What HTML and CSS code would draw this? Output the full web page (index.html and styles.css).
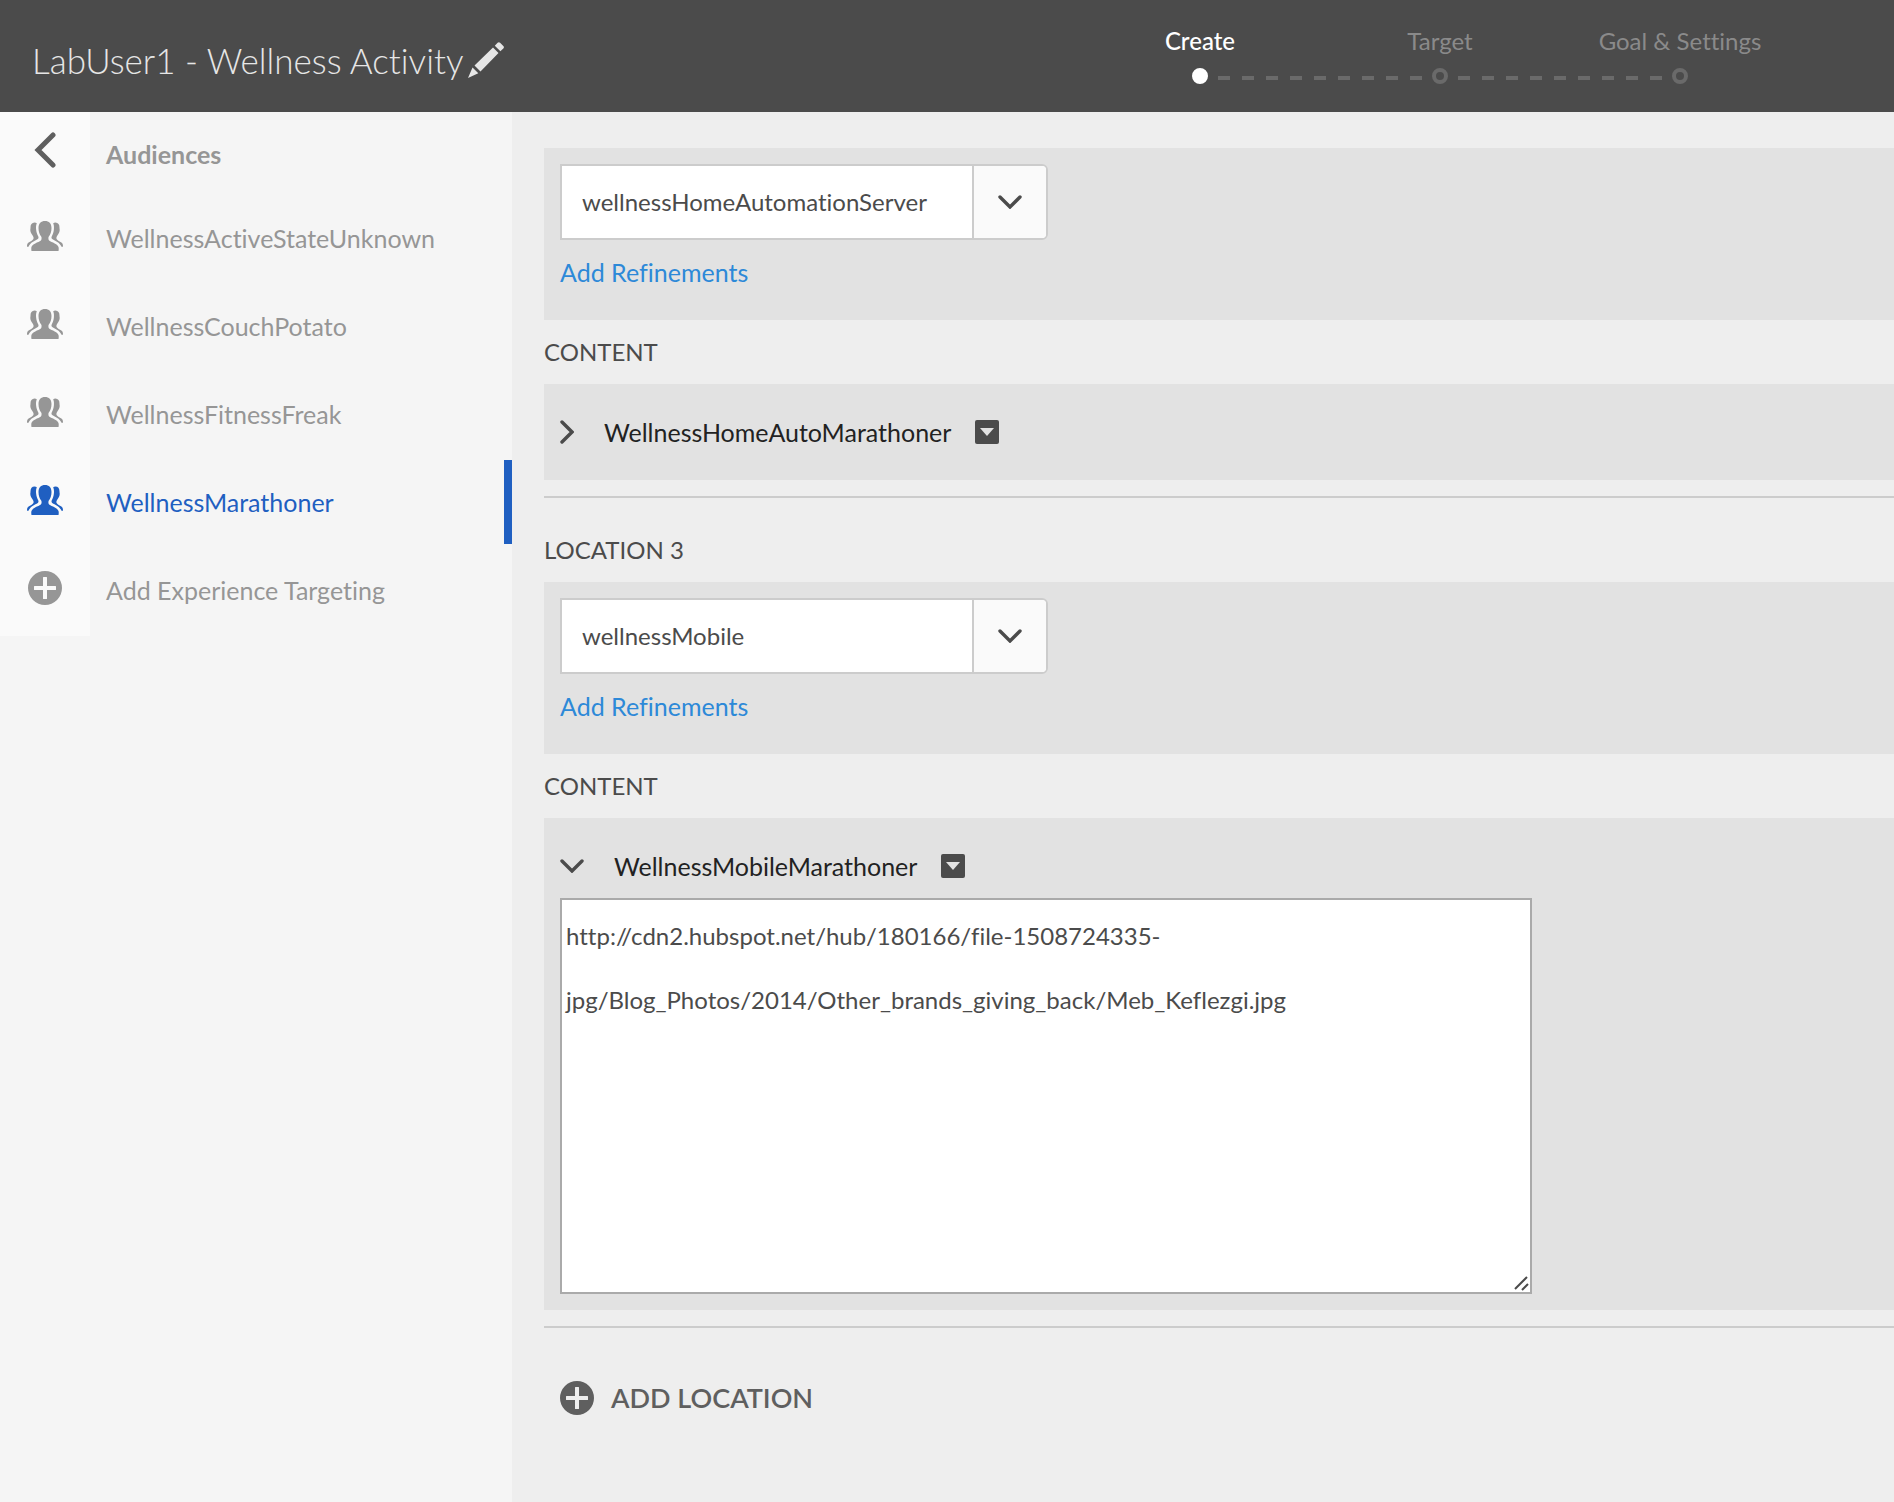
FILE: index.html
```html
<!DOCTYPE html>
<html lang="en">
<head>
<meta charset="utf-8">
<meta name="viewport" content="width=device-width, initial-scale=1">
<title>LabUser1 - Wellness Activity</title>
<link rel="stylesheet" href="styles.css">
</head>
<body>
<svg class="sprite" aria-hidden="true">
  <symbol id="people" viewBox="0 0 36 30">
    <path d="M18 0c4 0 6.500 2.400 6.500 7 0 3.800-1.200 6.800-2.700 8.600-.6.800-.5 3.300.3 3.900 2.500 1.800 9.200 3.600 9.600 7.300.1 1.300 0 2.200-.2 3.200h-27c-.2-1-.3-1.900-.2-3.200.4-3.700 7.100-5.500 9.600-7.300.8-.6.9-3.100.3-3.900-1.500-1.800-2.700-4.800-2.700-8.600C11.500 2.400 14 0 18 0z"/>
    <path d="M9.800 2.200C9 4 8.900 6 9.100 8.200c.2 2.600 1 5 2.200 7.200.4.900.2 2-.5 2.500-3.200 2-7.300 3.200-9.300 7.800H0c0-2 .2-3.200 1.600-4.200 1.700-1.200 4-2 4.800-3.600.6-1.400-.2-2.700-1.100-4-1.200-1.700-2-3.200-2-5.200 0-.8.300-1.200.2-2C3.400 3.500 4.800 1.400 7.600 1.400c.9 0 1.600.2 2.200.8z"/>
    <path d="M26.200 2.200c.8 1.800.9 3.800.7 6-.2 2.600-1 5-2.200 7.200-.4.900-.2 2 .5 2.500 3.200 2 7.300 3.200 9.300 7.800H36c0-2-.2-3.200-1.600-4.200-1.700-1.200-4-2-4.800-3.600-.6-1.400.2-2.700 1.100-4 1.200-1.700 2-3.200 2-5.200 0-.8-.3-1.200-.2-2 .1-3.200-1.300-5.300-4.100-5.300-.9 0-1.600.2-2.200.8z"/>
  </symbol>
  <symbol id="plus" viewBox="0 0 34 34">
    <path fill-rule="evenodd" d="M17 0a17 17 0 1 1 0 34 17 17 0 0 1 0-34zM15.500 6q-.5 0-.5.500V15H6.500q-.5 0-.5.500v3q0 .5.500.5H15v8.500q0 .5.500.5h3q.5 0 .5-.5V19h8.500q.5 0 .5-.5v-3q0-.5-.5-.5H19V6.500q0-.5-.5-.5z"/>
  </symbol>
  <symbol id="chevron-down" viewBox="0 0 24 14">
    <path d="M2 2l10 10L22 2" fill="none" stroke="currentColor" stroke-width="3.400" stroke-linecap="round"/>
  </symbol>
  <symbol id="chevron-right" viewBox="0 0 14 24">
    <path d="M2 2l10 10L2 22" fill="none" stroke="currentColor" stroke-width="3.400" stroke-linecap="round"/>
  </symbol>
  <symbol id="menu" viewBox="0 0 24 24">
    <rect width="24" height="24" rx="2"/>
    <path d="M5 8h14l-7 8z" fill="#e2e2e2"/>
  </symbol>
</svg>

<header class="topbar">
  <h1 class="title">LabUser1 - Wellness Activity
    <button class="icon-button" aria-label="Rename activity">
      <svg class="pencil" viewBox="0 0 36 36"><path d="M0 36l4.500-10.500 5.800 5.800zM6.500 23.500L25 5.500l5.500 5.500L12.500 29.500zM26.800 3.700l2.800-2.900q1.200-1.200 2.500 0l3.200 3.200q1.200 1.200 0 2.500l-2.900 2.800z"/></svg>
    </button>
  </h1>
  <ol class="steps">
    <li class="step step-current" aria-current="step">Create</li>
    <li class="step">Target</li>
    <li class="step">Goal &amp; Settings</li>
  </ol>
</header>

<div class="layout">
  <aside class="sidebar">
    <nav class="audiences" aria-label="Audiences">
      <div class="row row-head">
        <button class="icon-button rail" aria-label="Back"><svg class="back" viewBox="0 0 22 36"><path d="M19 3L4 18l15 15" fill="none" stroke="currentColor" stroke-width="5" stroke-linecap="round"/></svg></button>
        <h2 class="row-label">Audiences</h2>
      </div>
      <a class="row" href="#unknown"><span class="rail"><svg class="people"><use href="#people"/></svg></span><span class="row-label">WellnessActiveStateUnknown</span></a>
      <a class="row" href="#potato"><span class="rail"><svg class="people"><use href="#people"/></svg></span><span class="row-label">WellnessCouchPotato</span></a>
      <a class="row" href="#freak"><span class="rail"><svg class="people"><use href="#people"/></svg></span><span class="row-label">WellnessFitnessFreak</span></a>
      <a class="row row-active" href="#marathoner" aria-current="true"><span class="rail"><svg class="people"><use href="#people"/></svg></span><span class="row-label">WellnessMarathoner</span></a>
      <a class="row" href="#add"><span class="rail"><svg class="plus"><use href="#plus"/></svg></span><span class="row-label">Add Experience Targeting</span></a>
    </nav>
  </aside>

  <main class="main">
    <section class="location">
      <div class="panel picker">
        <div class="select">
          <select aria-label="Location 2"><option>wellnessHomeAutomationServer</option></select>
          <span class="select-arrow"><svg class="chevron-down"><use href="#chevron-down"/></svg></span>
        </div>
        <a class="refine" href="#refine-2">Add Refinements</a>
      </div>
      <h2 class="heading">CONTENT</h2>
      <div class="panel content">
        <div class="offer">
          <button class="icon-button" aria-label="Expand"><svg class="chevron-right"><use href="#chevron-right"/></svg></button>
          <span class="offer-name">WellnessHomeAutoMarathoner</span>
          <button class="icon-button" aria-label="Offer options"><svg class="menu"><use href="#menu"/></svg></button>
        </div>
      </div>
    </section>

    <section class="location">
      <h2 class="heading heading-location">LOCATION 3</h2>
      <div class="panel picker">
        <div class="select">
          <select aria-label="Location 3"><option>wellnessMobile</option></select>
          <span class="select-arrow"><svg class="chevron-down"><use href="#chevron-down"/></svg></span>
        </div>
        <a class="refine" href="#refine-3">Add Refinements</a>
      </div>
      <h2 class="heading">CONTENT</h2>
      <div class="panel content">
        <div class="offer">
          <button class="icon-button" aria-label="Collapse"><svg class="chevron-down"><use href="#chevron-down"/></svg></button>
          <label class="offer-name" for="offer">WellnessMobileMarathoner</label>
          <button class="icon-button" aria-label="Offer options"><svg class="menu"><use href="#menu"/></svg></button>
        </div>
        <div class="editor">
          <textarea id="offer" spellcheck="false">http://cdn2.hubspot.net/hub/180166/file-1508724335-jpg/Blog_Photos/2014/Other_brands_giving_back/Meb_Keflezgi.jpg</textarea>
          <svg class="grip" viewBox="0 0 16 16"><path d="M2 14L14 2M9 15l6-6" fill="none" stroke="currentColor" stroke-width="2"/></svg>
        </div>
      </div>
    </section>

    <button class="add-location"><svg class="plus"><use href="#plus"/></svg>ADD LOCATION</button>
  </main>
</div>
</body>
</html>
```
FILE: styles.css
```css
*, *::before, *::after { box-sizing: border-box; }

body {
  margin: 0;
  min-height: 100vh;
  display: flex;
  flex-direction: column;
  background: #eee;
  color: #4b4b4b;
  font: 25px/32px Lato, "Open Sans", sans-serif;
  font-variant-ligatures: none;
}

svg { display: block; fill: currentColor; flex: none; }
.sprite { position: absolute; width: 0; height: 0; }

h1, h2, ol { margin: 0; padding: 0; font-size: inherit; font-weight: inherit; }
a { color: inherit; text-decoration: none; }
button, select, textarea { font: inherit; font-variant-ligatures: none; color: inherit; }

.icon-button {
  display: flex;
  padding: 0;
  border: 0;
  background: none;
  cursor: pointer;
}

.people { width: 36px; height: 30px; }
.plus { width: 34px; height: 34px; }
.chevron-down { width: 24px; height: 14px; }
.chevron-right { width: 14px; height: 24px; }
.menu { width: 24px; height: 24px; }
.pencil { width: 36px; height: 36px; }
.back { width: 22px; height: 36px; }

/* Top bar */
.topbar {
  display: flex;
  justify-content: space-between;
  min-height: 112px;
  padding: 0 94px 0 32px;
  background: #4b4b4b;
}
.title {
  display: flex;
  align-items: center;
  gap: 4px;
  padding-top: 8px;
  color: #e6e6e6;
  font-size: 35px;
  font-weight: 300;
  line-height: 48px;
}
.title .icon-button { color: #e6e6e6; }

.steps {
  display: flex;
  padding-top: 25px;
  font-size: 24px;
  list-style: none;
}
.step {
  position: relative;
  width: 240px;
  color: #8a8a8a;
  text-align: center;
}
.step::before {
  content: "";
  position: absolute;
  top: 43px;
  left: 112px;
  width: 16px;
  height: 16px;
  border: 4px solid #6a6a6a;
  border-radius: 50%;
}
.step:not(:last-child)::after {
  content: "";
  position: absolute;
  top: 51px;
  left: 136px;
  width: 208px;
  height: 4px;
  background: repeating-linear-gradient(90deg, #6a6a6a 0 12px, transparent 12px 24px) 2px 0;
}
.step-current { color: #fff; font-weight: 500; }
.step-current::before { border-color: #fff; background: #fff; }

/* Sidebar */
.layout { display: flex; flex: 1; }
.sidebar { flex: none; width: 512px; background: #f5f5f5; color: #969696; }
.row { display: flex; height: 88px; }
.row-head { height: 84px; }
.rail {
  display: flex;
  align-items: center;
  justify-content: center;
  width: 90px;
  padding-bottom: 8px;
  background: #fafafa;
}
.row-label { flex: 1; padding: 26px 0 0 16px; }
.row-head .rail { color: #5f5f5f; }
.row-head .row-label { font-weight: 700; }
.row-active { color: #1f5fc1; }
.row-active::after { content: ""; width: 8px; height: 84px; background: #1f5fc1; }

/* Main column */
.main { flex: 1; min-width: 0; padding: 36px 0 80px 32px; }
.location { padding-bottom: 16px; border-bottom: 2px solid #ccc; }
.panel { padding: 16px; background: #e2e2e2; }
.picker { min-height: 172px; }
.heading { padding: 16px 0; font-size: 24px; }
.heading-location { padding-top: 36px; }

.select {
  display: grid;
  grid-template-columns: 100%;
  width: 488px;
  height: 76px;
  max-width: 100%;
  font-size: 24px;
}
.select > * { grid-area: 1 / 1; }
.select select {
  appearance: none;
  padding: 0 90px 0 20px;
  border: 2px solid #ccc;
  border-radius: 0 6px 6px 0;
  background: #fff;
}
.select-arrow {
  display: flex;
  align-items: center;
  justify-content: center;
  justify-self: end;
  width: 74px;
  margin: 2px;
  border-left: 2px solid #ccc;
  border-radius: 0 4px 4px 0;
  background: #fafafa;
  pointer-events: none;
}
.refine { display: inline-block; padding-top: 16px; color: #2d89d8; }

.offer { display: flex; align-items: center; height: 64px; color: #4b4b4b; }
.offer-name { margin: 0 24px 0 30px; color: #222; }

.editor { display: grid; width: 972px; max-width: 100%; }
.editor > * { grid-area: 1 / 1; }
.editor textarea {
  height: 396px;
  padding: 4px;
  border: 2px solid #aaa;
  border-radius: 0;
  background: #fff;
  font-size: 24px;
  line-height: 64px;
  resize: none;
}
.grip { width: 16px; height: 16px; place-self: end; margin: 3px; pointer-events: none; }

.add-location {
  display: flex;
  align-items: center;
  gap: 17px;
  margin: 52px 0 0 16px;
  padding: 0;
  border: 0;
  background: none;
  color: #5f5f5f;
  font-size: 27px;
  font-weight: 600;
  line-height: 36px;
}
```
